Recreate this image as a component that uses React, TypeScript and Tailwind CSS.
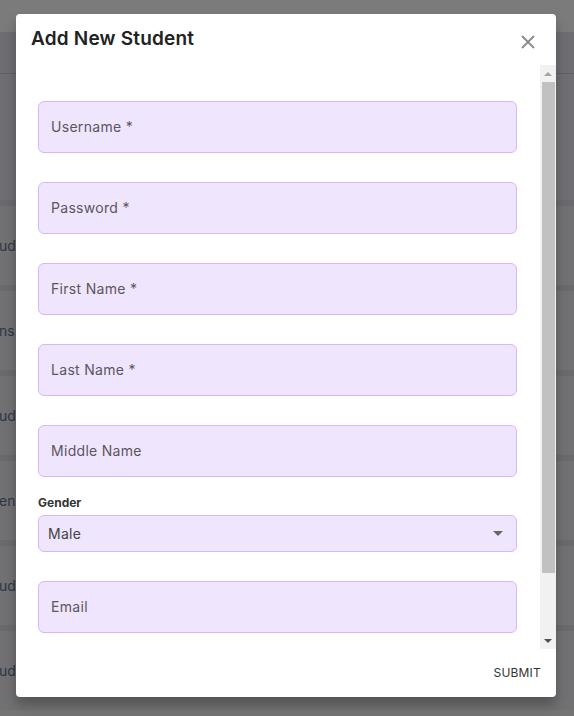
import React from "react";

function Field({ label }: { label: string }) {
  return (
    <div className="h-[52px] w-full rounded-[6px] border border-[#d9b6fa] bg-[#efe5fd] flex items-center pl-[12px]">
      <span className="text-[14px] tracking-[0.3px] text-[#5b5660] -mt-[1px]">{label}</span>
    </div>
  );
}

export default function App() {
  const font = { fontFamily: "Inter, 'Open Sans', sans-serif" };
  return (
    <div className="relative w-[574px] h-[716px] overflow-hidden bg-[#747474]" style={font}>
      {/* background page */}
      <div className="flex flex-col h-full">
        <div className="h-[32px] bg-[#7b7b7b]" />
        <div className="h-[42px] bg-[#6e6d72] border-b border-[#605f64]" />
        <div className="h-[126px] bg-[#6f6e72]" />
        {["ud", "ns", "ud", "en", "ud", "ud"].map((t, i) => (
          <div key={i} className="h-[85px] bg-[#717073] border-t-[6px] border-[#6a696d] flex items-center">
            <span className="text-[14px] text-[#2e3640] -ml-[1px]">{t}</span>
          </div>
        ))}
      </div>

      {/* modal */}
      <div className="absolute left-[16px] top-[14px] w-[540px] h-[683px] bg-white rounded-[4px] shadow-[0_8px_12px_rgba(0,0,0,0.25)] flex flex-col overflow-hidden">
        <div className="h-[51px] flex items-start justify-between pl-[15px] pr-[21px] pt-[11px]">
          <h2 className="text-[19px] font-semibold text-[#222222] tracking-[0.2px]">Add New Student</h2>
          <svg width="14" height="14" viewBox="0 0 14 14" className="mt-[10px]">
            <path d="M1 1 L13 13 M13 1 L1 13" stroke="#8a8a8a" strokeWidth="1.8" />
          </svg>
        </div>
        <div className="flex h-[584px]">
          <div className="flex-1 overflow-hidden pt-[36px] pl-[22px] pr-[23px] flex flex-col">
            <div className="flex flex-col gap-[29px]">
              <Field label="Username *" />
              <Field label="Password *" />
              <Field label="First Name *" />
              <Field label="Last Name *" />
              <Field label="Middle Name" />
            </div>
            <div className="mt-[19px] text-[12px] font-bold text-[#333333] leading-[14px]">Gender</div>
            <div className="mt-[5px] h-[37px] rounded-[6px] border border-[#d9b6fa] bg-[#efe5fd] flex items-center justify-between pl-[9px] pr-[13px]">
              <span className="text-[14px] tracking-[0.3px] text-[#444444]">Male</span>
              <svg width="10" height="5" viewBox="0 0 10 5">
                <path d="M0 0 L10 0 L5 5 Z" fill="#666666" />
              </svg>
            </div>
            <div className="mt-[29px]">
              <Field label="Email" />
            </div>
          </div>
          <div className="w-[16px] bg-[#f1f1f1] flex flex-col items-center">
            <div className="h-[17px] flex items-center justify-center">
              <svg width="8" height="4" viewBox="0 0 8 4">
                <path d="M0 4 L8 4 L4 0 Z" fill="#a3a3a3" />
              </svg>
            </div>
            <div className="w-[13px] h-[491px] bg-[#c1c1c1]" />
            <div className="flex-1" />
            <div className="h-[17px] flex items-center justify-center">
              <svg width="8" height="4" viewBox="0 0 8 4">
                <path d="M0 0 L8 0 L4 4 Z" fill="#505050" />
              </svg>
            </div>
          </div>
        </div>
        <div className="flex-1 flex items-center justify-end pr-[15px]">
          <span className="text-[12px] text-[#333333] tracking-[0.2px]">SUBMIT</span>
        </div>
      </div>
    </div>
  );
}
